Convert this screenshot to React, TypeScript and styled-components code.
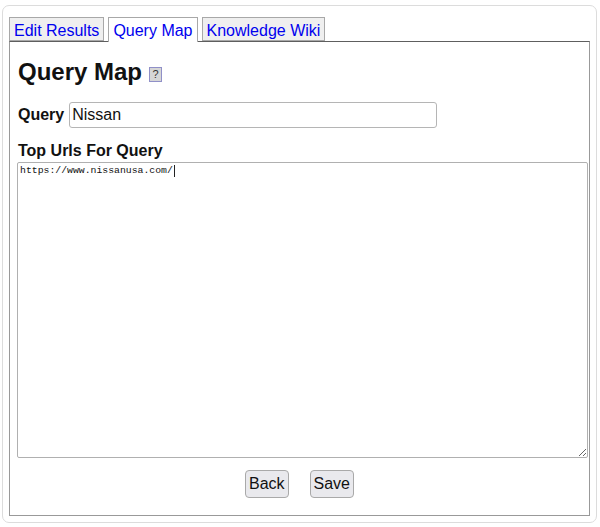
import React from "react";
import styled, { createGlobalStyle } from "styled-components";

const Global = createGlobalStyle`
  html, body { margin: 0; padding: 0; background: #fff; }
  body { font-family: "Liberation Sans", Arial, sans-serif; }
`;

const Page = styled.div`
  padding: 5px 0 0 2px;
`;

const Card = styled.div`
  box-sizing: border-box;
  width: 595px;
  height: 518px;
  border: 1px solid #dcdcdc;
  border-radius: 7px;
  padding: 11px 6px 6px 6px;
  display: flex;
  flex-direction: column;
`;

const TabBar = styled.div`
  display: flex;
  gap: 4px;
  align-items: flex-end;
  position: relative;
  z-index: 1;
`;

const Tab = styled.a<{ $active?: boolean }>`
  display: block;
  box-sizing: border-box;
  height: ${(p) => (p.$active ? "25px" : "24px")};
  margin-bottom: ${(p) => (p.$active ? "-1px" : "0")};
  padding: 4px 4px 0 4px;
  border: 1px solid #a8a8a8;
  border-bottom: ${(p) => (p.$active ? "none" : "1px solid #a8a8a8")};
  background: ${(p) => (p.$active ? "#fff" : "#efefef")};
  color: #0000ee;
  font-size: 16px;
  line-height: 18px;
  text-decoration: none;
  white-space: nowrap;
  cursor: pointer;
`;

const Panel = styled.div`
  flex: 1;
  box-sizing: border-box;
  border: 1px solid #999;
  border-top: 1px solid #5e5e5e;
  padding: 8px 7px 0 7px;
  display: flex;
  flex-direction: column;
`;

const Title = styled.h2`
  margin: 8px 0 0 1px;
  font-size: 24px;
  line-height: 28px;
  font-weight: bold;
  color: #111;
  display: flex;
  align-items: baseline;
  gap: 7px;
`;

const Help = styled.span`
  display: inline-block;
  box-sizing: border-box;
  width: 13px;
  height: 15px;
  border: 1px solid #9090c8;
  background: #d6d6d6;
  color: #333;
  font-size: 11px;
  line-height: 13px;
  font-weight: normal;
  text-align: center;
  position: relative;
  top: -2px;
`;

const Row = styled.div`
  display: flex;
  align-items: center;
  gap: 5px;
  margin-top: 16px;
`;

const Label = styled.label`
  font-size: 16px;
  line-height: 18px;
  font-weight: bold;
  color: #111;
  padding-left: 1px;
`;

const TextInput = styled.input`
  box-sizing: border-box;
  width: 368px;
  height: 26px;
  border: 1px solid #b5b5b5;
  border-radius: 3px;
  padding: 1px 2px;
  font-family: "Liberation Sans", Arial, sans-serif;
  font-size: 16px;
  color: #111;
  outline: none;
`;

const SectionLabel = styled(Label)`
  display: block;
  margin-top: 14px;
`;

const AreaWrap = styled.div`
  position: relative;
  margin-top: 2px;
  width: 571px;
`;

const Area = styled.textarea`
  display: block;
  box-sizing: border-box;
  width: 571px;
  height: 296px;
  border: 1px solid #b0b0b0;
  border-radius: 2px;
  padding: 2px;
  font-family: "Liberation Mono", "DejaVu Sans Mono", monospace;
  font-size: 9.8px;
  line-height: 12px;
  color: #111;
  outline: none;
  resize: both;
`;

const Caret = styled.span`
  position: absolute;
  left: 157px;
  top: 3px;
  width: 1px;
  height: 12px;
  background: #222;
`;

const Actions = styled.div`
  display: flex;
  justify-content: center;
  gap: 21px;
  margin-top: 12px;
`;

const Button = styled.button`
  box-sizing: border-box;
  height: 28px;
  padding: 0 3px;
  border: 1px solid #a9a9a9;
  border-radius: 4px;
  background: #e9e9ed;
  color: #111;
  font-family: "Liberation Sans", Arial, sans-serif;
  font-size: 16px;
  cursor: pointer;
`;

export default function App() {
  return (
    <>
      <Global />
      <Page>
        <Card>
          <TabBar>
            <Tab>Edit Results</Tab>
            <Tab $active>Query Map</Tab>
            <Tab>Knowledge Wiki</Tab>
          </TabBar>
          <Panel>
            <Title>
              Query Map <Help>?</Help>
            </Title>
            <Row>
              <Label htmlFor="q">Query</Label>
              <TextInput id="q" defaultValue="Nissan" />
            </Row>
            <SectionLabel htmlFor="urls">Top Urls For Query</SectionLabel>
            <AreaWrap>
              <Area id="urls" defaultValue="https://www.nissanusa.com/" spellCheck={false} />
              <Caret />
            </AreaWrap>
            <Actions>
              <Button>Back</Button>
              <Button>Save</Button>
            </Actions>
          </Panel>
        </Card>
      </Page>
    </>
  );
}
